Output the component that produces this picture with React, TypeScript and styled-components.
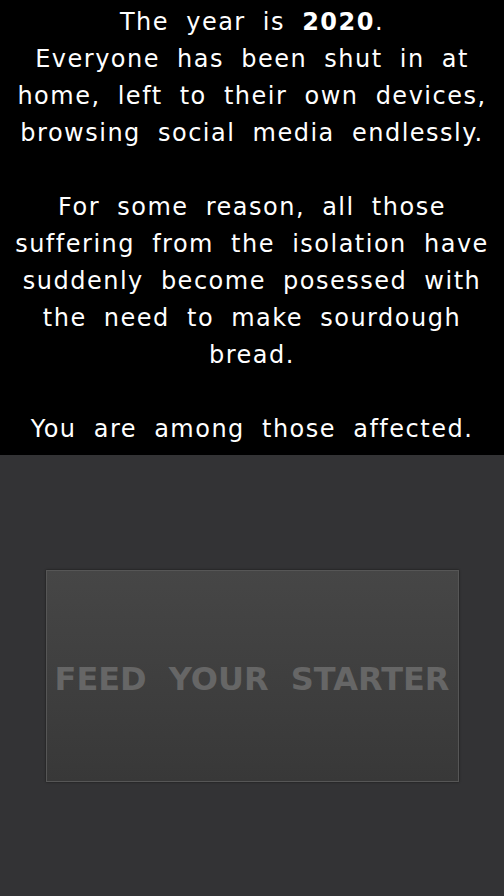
import React from 'react'
import styled, { createGlobalStyle } from 'styled-components'

const GlobalStyle = createGlobalStyle`
  html, body {
    margin: 0;
    padding: 0;
    background: #333335;
  }
  #root {
    min-height: 896px;
  }
`

const Page = styled.div`
  display: flex;
  flex-direction: column;
  min-height: 896px;
  background: #333335;
`

const Intro = styled.div`
  background: #000;
  color: #fff;
  font-family: 'DejaVu Sans', sans-serif;
  font-size: 24px;
  line-height: 37px;
  letter-spacing: 1.5px;
  word-spacing: 8px;
  text-align: center;
  padding: 4px 8px 7px;
`

const Year = styled.span`
  font-weight: bold;
`

const Stage = styled.div`
  flex: 1;
  display: flex;
  justify-content: center;
  padding-top: 115px;
`

const StarterButton = styled.button`
  width: 413px;
  height: 212px;
  border: 1px solid #565656;
  box-shadow: 0 0 2px rgba(0, 0, 0, 0.6);
  background: linear-gradient(to bottom, #464646, #383838);
  color: #666;
  font-family: 'DejaVu Sans', sans-serif;
  font-weight: bold;
  font-size: 32px;
  word-spacing: 11px;
  cursor: pointer;
  padding: 6px 0 0;
`

const App: React.FC = () => {
  return (
    <Page>
      <GlobalStyle />
      <Intro>
        The year is <Year>2020</Year>.
        <br />
        Everyone has been shut in at home, left to their own devices, browsing social media endlessly.
        <br />
        <br />
        For some reason, all those suffering from the isolation have suddenly become posessed with the need to make sourdough bread.
        <br />
        <br />
        You are among those affected.
      </Intro>
      <Stage>
        <StarterButton>FEED YOUR STARTER</StarterButton>
      </Stage>
    </Page>
  )
}

export default App
